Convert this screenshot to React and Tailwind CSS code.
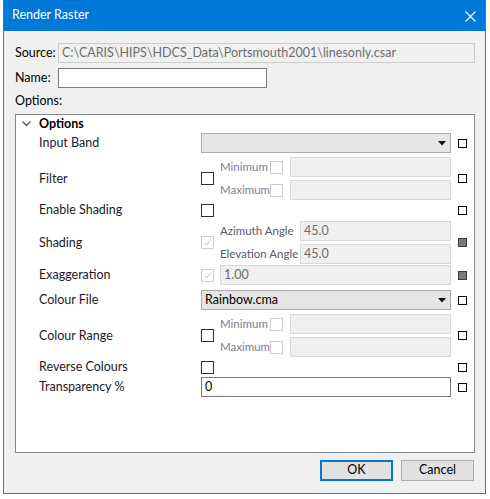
import React from 'react';

const font = { fontFamily: 'Lato, "Liberation Sans", Arial, sans-serif' };

function Indicator({ filled }) {
  return (
    <div
      className={
        'ml-[7px] w-[9px] h-[9px] shrink-0 border ' +
        (filled ? 'bg-[#7a7a7a] border-[#3c3c3c]' : 'bg-white border-black')
      }
    />
  );
}

function CheckBox({ disabled, checked }) {
  return (
    <div
      className={
        'w-[13px] h-[13px] shrink-0 border flex items-center justify-center bg-white ' +
        (disabled ? 'border-[#cccccc]' : 'border-[#333333]')
      }
    >
      {checked && (
        <svg width="11" height="11" viewBox="0 0 11 11">
          <polyline points="2,5.5 4.5,8 9,2.5" fill="none" stroke="#c2c2c2" strokeWidth="1" />
        </svg>
      )}
    </div>
  );
}

function Field({ value, className = '' }) {
  return (
    <div
      className={
        'h-[20px] border border-[#d9d9d9] bg-[#f0f0f0] flex items-center pl-[3px] pt-[1px] text-[12.5px] text-[#6d6d6d] ' +
        className
      }
    >
      {value}
    </div>
  );
}

function Combo({ value }) {
  return (
    <div className="w-[250px] h-[20px] border border-[#adadad] bg-[#e5e5e5] flex items-center justify-between pl-[3px] pr-[4px] text-[12.5px] text-black">
      <span className="pt-[1px]">{value}</span>
      <svg width="8" height="5" viewBox="0 0 8 5">
        <polygon points="0,0 8,0 4,4.5" fill="#111" />
      </svg>
    </div>
  );
}

function Row({ label, h, mt, filled, children }) {
  return (
    <div className={'flex items-center ' + h + ' ' + mt}>
      <div className="w-[185px] pl-[23px] pt-[1px] text-[12.5px] text-[#1b1b2b] shrink-0 whitespace-nowrap">{label}</div>
      <div className="w-[250px] h-full flex items-center">{children}</div>
      <Indicator filled={filled} />
    </div>
  );
}

function MinMax() {
  return (
    <div className="flex items-center w-full">
      <CheckBox />
      <div className="ml-[6px] flex-1 flex flex-col gap-[3px]">
        {['Minimum', 'Maximum'].map((l) => (
          <div key={l} className="flex items-center h-[20px]">
            <div className="w-[50px] text-[11.5px] text-[#7b7c98] whitespace-nowrap">{l}</div>
            <CheckBox disabled />
            <Field className="ml-[7px] flex-1" />
          </div>
        ))}
      </div>
    </div>
  );
}

export default function App() {
  return (
    <div className="w-[490px] h-[499px] bg-white" style={font}>
      <div className="ml-[3px] w-[483px] h-[494px] border border-[#2a7fcf] border-t-[#0078d7] bg-[#f0f0f0] flex flex-col">
        <div className="h-[30px] bg-[#0078d7] flex items-center justify-between pl-[8px] pr-[9px] text-white text-[12.5px] shrink-0">
          <span className="pb-[1px]">Render Raster</span>
          <svg width="11" height="11" viewBox="0 0 11 11">
            <path d="M0.5 0.5 L10.5 10.5 M10.5 0.5 L0.5 10.5" stroke="white" strokeWidth="1.1" />
          </svg>
        </div>

        <div className="mt-[12px] h-[20px] flex items-center pl-[11px] pr-[10px] text-[12.5px] text-black">
          <div className="w-[43px]">Source:</div>
          <div className="flex-1 h-[20px] border border-[#cccccc] bg-[#f0f0f0] flex items-center pl-[3px] text-[#6d6d6d] whitespace-nowrap">
            C:\CARIS\HIPS\HDCS_Data\Portsmouth2001\linesonly.csar
          </div>
        </div>

        <div className="mt-[5px] h-[20px] flex items-center pl-[11px] text-[12.5px] text-black">
          <div className="w-[43px]">Name:</div>
          <div className="w-[209px] h-[20px] border border-[#7a7a7a] bg-white" />
        </div>

        <div className="h-[26px] flex items-center pl-[11px] text-[12.5px] text-black">Options:</div>

        <div className="ml-[11px] mr-[10px] h-[339px] border border-[#828790] bg-white flex flex-col">
          <div className="h-[18px] flex items-center pl-[6px] text-[12.5px] text-black">
            <svg width="9" height="6" viewBox="0 0 9 6">
              <polyline points="0.5,0.5 4.5,4.5 8.5,0.5" fill="none" stroke="#555" strokeWidth="1.3" />
            </svg>
            <span className="ml-[8px] font-bold">Options</span>
          </div>

          <Row label="Input Band" h="h-[20px]" mt="mt-0">
            <Combo value="" />
          </Row>

          <Row label="Filter" h="h-[43px]" mt="mt-[4px]">
            <MinMax />
          </Row>

          <Row label="Enable Shading" h="h-[16px]" mt="mt-[2px]">
            <CheckBox />
          </Row>

          <Row label="Shading" h="h-[43px]" mt="mt-[3px]" filled>
            <div className="flex items-center w-full">
              <CheckBox disabled checked />
              <div className="ml-[6px] flex-1 flex flex-col gap-[3px]">
                {['Azimuth Angle', 'Elevation Angle'].map((l) => (
                  <div key={l} className="flex items-center h-[20px]">
                    <div className="w-[80px] text-[11.5px] text-[#5a5a6a] whitespace-nowrap">{l}</div>
                    <Field className="flex-1" value="45.0" />
                  </div>
                ))}
              </div>
            </div>
          </Row>

          <Row label="Exaggeration" h="h-[20px]" mt="mt-[1px]" filled>
            <div className="flex items-center w-full">
              <CheckBox disabled checked />
              <Field className="ml-[6px] flex-1" value="1.00" />
            </div>
          </Row>

          <Row label="Colour File" h="h-[20px]" mt="mt-[5px]">
            <Combo value="Rainbow.cma" />
          </Row>

          <Row label="Colour Range" h="h-[43px]" mt="mt-[4px]">
            <MinMax />
          </Row>

          <Row label="Reverse Colours" h="h-[16px]" mt="mt-[2px]">
            <CheckBox />
          </Row>

          <Row label="Transparency %" h="h-[20px]" mt="mt-[2px]">
            <div className="w-full h-[20px] border border-[#7a7a7a] bg-white flex items-center pl-[3px] pt-[1px] text-[12.5px] text-black">
              0
            </div>
          </Row>
        </div>

        <div className="mt-[7px] flex justify-end gap-[8px] pr-[11px] text-[12.5px] text-black">
          <button className="w-[73px] h-[21px] border-2 border-[#0078d7] bg-[#e1e1e1] flex items-center justify-center">
            OK
          </button>
          <button className="w-[73px] h-[21px] border border-[#adadad] bg-[#e1e1e1] flex items-center justify-center">
            Cancel
          </button>
        </div>
      </div>
    </div>
  );
}
